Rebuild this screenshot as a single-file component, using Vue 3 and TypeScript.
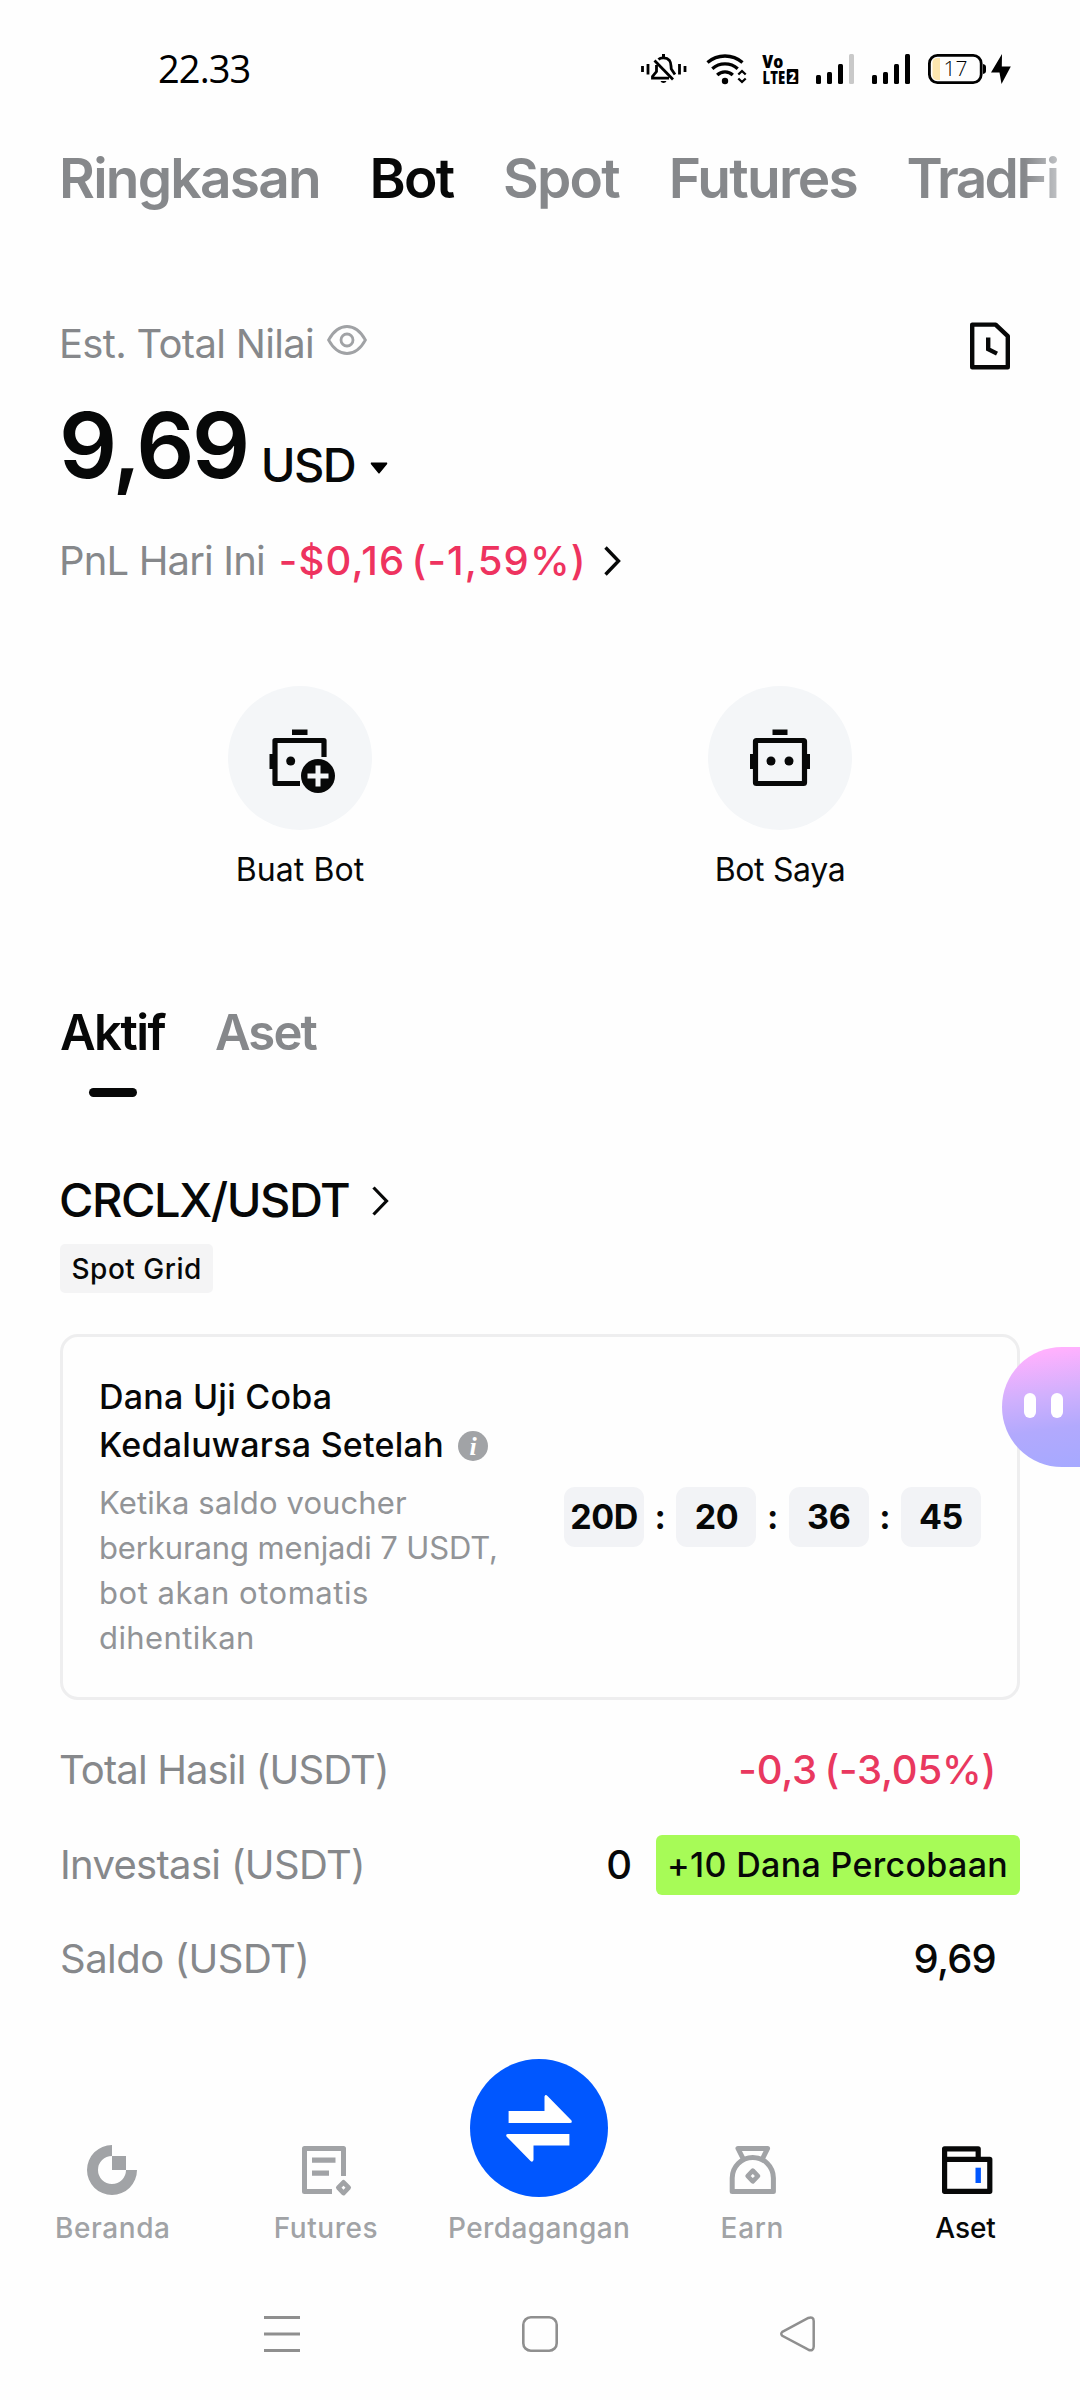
<script setup lang="ts">
interface Line {
  text: string
  spacing: number
}

const tabs = ['Ringkasan', 'Bot', 'Spot', 'Futures', 'TradFi']

const description: Line[] = [
  { text: 'Ketika saldo voucher', spacing: 0.11 },
  { text: 'berkurang menjadi 7 USDT,', spacing: -0.12 },
  { text: 'bot akan otomatis', spacing: 0.53 },
  { text: 'dihentikan', spacing: 0.41 },
]

const countdown = ['20D', '20', '36', '45']
</script>

<template>
  <div class="screen">
    <header class="status">
      <span class="clock">22.33</span>
      <svg class="status-icons" viewBox="636 50 380 40" width="380" height="40">
        <!-- muted bell -->
        <g fill="none" stroke="#000" stroke-width="2.8">
          <path d="M642.5 66v6M648 64v10.5M679.5 64v10.5M685 66v6" />
          <path d="M656.5 65v6.5L652.5 76.5V78.2H669" />
          <path d="M658.5 59.5C660.5 57.4 666.5 57 669.5 60.5C671.5 63 670.8 66.5 671.3 69L675 74.5" />
          <path d="M654.5 60.5L673 79.5" />
        </g>
        <path d="M662 54h3v3h-3zM660.5 81h6a3.2 3 0 0 1-6 0z" />
        <!-- wifi -->
        <g fill="none" stroke="#000" stroke-width="3.3">
          <path d="M707.5 62.5C717.5 53.8 732.5 53.8 742.5 62.5" />
          <path d="M712.3 68.8C719.5 62.3 730.5 62.3 737.7 68.8" />
          <path d="M717.2 75C721.5 70.9 728.5 70.9 732.8 75" />
          <path stroke-width="2.3" d="M738.3 74.5L742 71L745.7 74.5M738.3 78.5L742 82L745.7 78.5" />
        </g>
        <circle cx="725" cy="81" r="3.2" />
        <!-- VoLTE -->
        <rect x="786.8" y="69" width="11.5" height="15" rx="1" />
        <text class="volte">
          <tspan x="762.3" y="68.3" textLength="21" lengthAdjust="spacingAndGlyphs">Vo</tspan>
          <tspan x="762.6" y="83.5" textLength="22.5" lengthAdjust="spacingAndGlyphs">LTE</tspan>
          <tspan x="789" y="81.5" font-size="13.5" fill="#fff" textLength="7" lengthAdjust="spacingAndGlyphs">2</tspan>
        </text>
        <!-- signal bars -->
        <g>
          <rect x="816" y="75" width="5" height="9" rx="1.5" />
          <rect x="827" y="72" width="5" height="12" rx="1.5" />
          <rect x="838" y="64" width="5" height="20" rx="1.5" />
          <rect x="849" y="54" width="5" height="30" rx="1.5" fill="#c9c9c9" />
          <rect x="872" y="75" width="5" height="9" rx="1.5" />
          <rect x="883" y="72" width="5" height="12" rx="1.5" />
          <rect x="894" y="64" width="5" height="20" rx="1.5" />
          <rect x="905" y="54" width="5" height="30" rx="1.5" />
        </g>
        <!-- battery -->
        <path d="M940 58v22h-3a4.5 4.5 0 0 1-4.5-4.5V62.5a4.5 4.5 0 0 1 4.5-4.5z" fill="#fde6ae" />
        <rect x="929.4" y="55.4" width="51.8" height="27.2" rx="8" fill="none" stroke="#000" stroke-width="2.8" />
        <path d="M983 64q3 .6 3 3v4q0 2.4-3 3z" />
        <text class="charge" x="943.5" y="76">17</text>
        <path d="M1002 54L991 72.5H999.5L1001.5 84L1010.8 66.5H1001.8Z" />
      </svg>
    </header>

    <nav class="tabs">
      <span v-for="tab in tabs" :key="tab" class="tab" :class="{ on: tab === 'Bot', last: tab === 'TradFi' }">{{ tab }}</span>
    </nav>

    <section class="overview">
      <div class="est">
        <span class="est-label">Est. Total Nilai</span>
        <svg class="eye" viewBox="0 0 40 30" width="40" height="30" fill="none" stroke="#a0a2a5" stroke-width="2.8">
          <path d="M1.6 15C6 7 12.5 1.5 20 1.5S34 7 38.4 15C34 23 27.5 28.5 20 28.5S6 23 1.6 15Z" />
          <circle cx="20" cy="15" r="6" />
        </svg>
        <svg class="history" viewBox="0 0 40 48" width="40" height="48" fill="none" stroke="#070808" stroke-width="4.4">
          <path d="M2.2 2.6H25.6L37.8 14.2V45.2H2.2Z" stroke-linejoin="round" />
          <path d="M18.2 15.4V27.2L27 31.6" />
        </svg>
      </div>
      <div class="amount">
        <span class="number">9,69</span>
        <span class="currency">USD</span>
        <svg class="caret" viewBox="0 0 18 12" width="18" height="12"><path d="M1 .5H17Q17.6 1.5 17 2.2L9.8 11Q9 12 8.2 11L1 2.2Q.4 1.5 1 .5Z" /></svg>
      </div>
      <div class="pnl">
        <span class="pnl-label">PnL Hari Ini</span>
        <span class="pnl-value">-$0,16 (-1,59%)</span>
        <svg viewBox="0 0 17 30" width="17" height="30" fill="none" stroke="#070808" stroke-width="3.4"><path d="M1.5 1.5L14.5 15L1.5 28.5" /></svg>
      </div>
    </section>

    <section class="actions">
      <div class="action">
        <svg class="disc" viewBox="0 0 144 144" width="144" height="144">
          <path d="M96 71V54.5H47V97.5H72" fill="none" stroke="#070808" stroke-width="5.2" stroke-linejoin="round" />
          <path d="M64 43.5h15.5v5.5H64zM41.5 68h4v15h-4z" fill="#070808" />
          <circle cx="62.7" cy="75" r="4.5" fill="#070808" />
          <circle cx="90" cy="90" r="17" fill="#070808" />
          <path d="M90 79.5v21M79.5 90h21" stroke="#f4f6f8" stroke-width="5" />
        </svg>
        <span class="l1">Buat Bot</span>
      </div>
      <div class="action">
        <svg class="disc" viewBox="0 0 144 144" width="144" height="144">
          <rect x="47.5" y="54.5" width="49" height="43" rx="1" fill="none" stroke="#070808" stroke-width="5.2" />
          <path d="M64.5 43.5h15v5.5h-15zM42 68h4v15h-4zM98 68h4v15h-4z" fill="#070808" />
          <circle cx="63" cy="75" r="4.5" fill="#070808" />
          <circle cx="81" cy="75" r="4.5" fill="#070808" />
        </svg>
        <span class="l2">Bot Saya</span>
      </div>
    </section>

    <nav class="subtabs">
      <span class="subtab on">Aktif</span>
      <span class="subtab off">Aset</span>
    </nav>
    <div class="indicator"></div>

    <section class="bot">
      <div class="pair">
        <span>CRCLX/USDT</span>
        <svg viewBox="0 0 17 30" width="17" height="30" fill="none" stroke="#070808" stroke-width="3.2"><path d="M1.5 1.5L14.5 15L1.5 28.5" /></svg>
      </div>
      <span class="tag">Spot Grid</span>

      <div class="card">
        <div class="card-text">
          <div class="title">Dana Uji Coba</div>
          <div class="title">
            <span>Kedaluwarsa Setelah</span>
            <svg class="info" viewBox="0 0 30 30" width="30" height="30"><circle cx="15" cy="15" r="15" fill="#a1a3a6" /><text x="15" y="23.5" text-anchor="middle">i</text></svg>
          </div>
          <div class="desc">
            <div v-for="line in description" :key="line.text" :style="{ letterSpacing: line.spacing + 'px' }">{{ line.text }}</div>
          </div>
        </div>
        <div class="timer">
          <template v-for="(unit, i) in countdown" :key="i">
            <span v-if="i > 0" class="colon">:</span>
            <span class="unit">{{ unit }}</span>
          </template>
        </div>
      </div>

      <div class="row">
        <span class="key k1">Total Hasil (USDT)</span>
        <span class="value loss">-0,3 (-3,05%)</span>
      </div>
      <div class="row">
        <span class="key k2">Investasi (USDT)</span>
        <span class="value zero">0</span>
        <span class="badge">+10 Dana Percobaan</span>
      </div>
      <div class="row">
        <span class="key k3">Saldo (USDT)</span>
        <span class="value balance">9,69</span>
      </div>
    </section>

    <div class="assistant"><i></i><i></i></div>

    <nav class="bottom">
      <div class="item">
        <svg viewBox="0 0 60 52" width="60" height="52" fill="#a1a3a6"><path d="M29 0A25 25 0 1 0 54 25H43A14 14 0 1 1 29 11ZM29 11h14v14h-14z" /></svg>
        <span class="n1">Beranda</span>
      </div>
      <div class="item">
        <svg viewBox="0 0 60 52" width="60" height="52" fill="none" stroke="#a1a3a6" stroke-width="5">
          <path d="M47.5 31V3.5H8.5V46.5H36" stroke-linejoin="round" />
          <path d="M16 15.2H39.5M16 28.2H33" stroke-width="5.3" />
          <path d="M47.5 37.3L52.7 42.7L47.5 48.1L42.3 42.7Z" stroke-width="4.6" stroke-linejoin="round" />
        </svg>
        <span class="n2">Futures</span>
      </div>
      <div class="item">
        <svg class="trade" viewBox="0 0 138 138" width="138" height="138">
          <circle cx="69" cy="69" r="69" fill="#0057ff" />
          <path d="M38.6 52H74.5V37.5Q75.5 35 77.5 37L101.5 61.5Q102.5 64 100 64H38.6Z" fill="#fff" />
          <path d="M99.4 75V86.5H63.5V101Q62.5 104 60.5 102L36.5 77.5Q35.5 75 38 75Z" fill="#fff" />
        </svg>
        <span class="n3">Perdagangan</span>
      </div>
      <div class="item">
        <svg viewBox="0 0 60 52" width="60" height="52" fill="none" stroke="#a1a3a6" stroke-width="5" stroke-linejoin="round">
          <path d="M10.2 46.5V33A20.6 20.6 0 0 1 51.4 33V46.5Z" />
          <path d="M21.5 14.5L16 3.5H45.6L40.1 14.5" />
          <path d="M30.8 25.6L36 31L30.8 36.4L25.6 31Z" stroke-width="4.6" />
        </svg>
        <span class="n4">Earn</span>
      </div>
      <div class="item active">
        <svg viewBox="0 0 60 52" width="60" height="52" fill="none" stroke="#070808" stroke-width="5.2" stroke-linejoin="round">
          <path d="M8.6 14.3V3.8H42.2V14.3" />
          <path d="M8.6 14.3H53.8V46.3H8.6Z" />
          <path d="M42.2 22.7V38" stroke="#0057ff" stroke-width="5.4" />
        </svg>
        <span class="n5">Aset</span>
      </div>
    </nav>

    <footer class="system">
      <svg viewBox="0 0 36 36" width="36" height="36" stroke="#8f8f8f" stroke-width="2.9"><path d="M0 1.5H36M0 18H36M0 34.5H36" /></svg>
      <svg viewBox="0 0 36 36" width="36" height="36" fill="none" stroke="#8f8f8f" stroke-width="2.6"><rect x="1.3" y="1.3" width="33.4" height="33.4" rx="7.5" /></svg>
      <svg viewBox="0 0 36 36" width="36" height="36" fill="none" stroke="#8f8f8f" stroke-width="2.5"><path d="M2.3 15.8L28.3 2Q33.6 .2 33.7 5V30.5Q33.6 35.5 28.3 33.7L2.3 19.8Q.2 17.8 2.3 15.8Z" /></svg>
    </footer>
  </div>
</template>

<style>
body {
  background: #fefefe;
}
</style>

<style scoped>
.screen {
  position: relative;
  box-sizing: border-box;
  width: 1080px;
  height: 2400px;
  overflow: hidden;
  background: #fefefe;
  color: #070808;
  font-family: Inter, 'Liberation Sans', sans-serif;
  white-space: nowrap;
}
svg {
  display: block;
  flex: none;
}
.status {
  display: flex;
  align-items: center;
  justify-content: space-between;
  height: 137px;
  padding: 0 64px 0 158px;
}
.clock {
  margin-top: -2px;
  font-family: 'Open Sans', sans-serif;
  font-size: 38px;
  line-height: 50px;
  letter-spacing: -0.9px;
  color: #000;
}
.status-icons {
  margin-top: 3px;
}
.volte {
  font-family: 'Open Sans', sans-serif;
  font-size: 17.5px;
  font-weight: 800;
}
.charge {
  font-family: 'Open Sans', sans-serif;
  font-size: 21px;
  font-weight: 300;
}
.tabs {
  display: flex;
  gap: 49.6px;
  height: 82px;
  width: 1021px;
  padding-left: 59px;
  font-size: 55px;
  line-height: 82px;
  font-weight: 600;
  letter-spacing: -1.75px;
  color: #86888b;
}
.tab.on {
  color: #070808;
}
.tab.last {
  letter-spacing: -2.7px;
  color: transparent;
  background: linear-gradient(90deg, #86888b 78%, #bfc1c4 100%);
  background-clip: text;
  -webkit-background-clip: text;
}
.overview {
  margin-top: 99px;
  padding: 0 70px 0 59px;
}
.est {
  display: flex;
  align-items: center;
  height: 51px;
}
.est-label,
.pnl-label {
  font-size: 40px;
  line-height: 51px;
  color: #86888b;
}
.est-label {
  letter-spacing: -0.69px;
}
.eye {
  margin: -7px 0 0 13px;
}
.history {
  margin: 4px 0 0 auto;
}
.amount {
  display: flex;
  align-items: flex-end;
  height: 92px;
  margin-top: 30px;
}
.number {
  font-size: 91px;
  line-height: 92px;
  font-weight: 600;
  letter-spacing: -2.46px;
}
.currency {
  margin-left: 13px;
  font-size: 47px;
  line-height: 52px;
  font-weight: 500;
  letter-spacing: -1.58px;
}
.caret {
  margin: 0 0 17px 15px;
}
.pnl {
  display: flex;
  align-items: center;
  height: 51px;
  margin-top: 44px;
}
.pnl-label {
  letter-spacing: -0.84px;
}
.pnl-value {
  margin: 0 17px 0 14px;
  font-size: 40px;
  line-height: 51px;
  font-weight: 500;
  letter-spacing: 1.15px;
  word-spacing: -5.5px;
  color: #ee335f;
}
.actions {
  display: grid;
  grid-template-columns: 480px 480px;
  margin-top: 100px;
  padding-left: 60px;
}
.action {
  display: flex;
  flex-direction: column;
  align-items: center;
  gap: 20px;
  font-size: 32px;
  line-height: 40px;
}
.disc {
  border-radius: 50%;
  background: #f4f6f8;
}
.l1 {
  letter-spacing: 0.08px;
}
.l2 {
  letter-spacing: -0.35px;
}
.subtabs {
  display: flex;
  gap: 50px;
  margin-top: 113px;
  padding-left: 60px;
  font-size: 49px;
  line-height: 60px;
  font-weight: 600;
}
.subtab.on {
  letter-spacing: -1.55px;
}
.subtab.off {
  letter-spacing: -1.9px;
  color: #86888b;
}
.indicator {
  width: 48px;
  height: 9px;
  margin: 25px 0 0 89px;
  border-radius: 5px;
  background: #070808;
}
.bot {
  margin-top: 73px;
  padding: 0 60px;
}
.pair {
  display: flex;
  align-items: center;
  gap: 23px;
  height: 60px;
  margin-left: -1px;
  font-size: 47px;
  line-height: 60px;
  font-weight: 500;
  letter-spacing: -1.44px;
}
.pair svg {
  margin-top: 2px;
}
.tag {
  display: block;
  box-sizing: border-box;
  width: 153px;
  height: 49px;
  margin-top: 14px;
  padding-left: 11.5px;
  border-radius: 5px;
  background: #f4f4f5;
  font-size: 28px;
  line-height: 50px;
  font-weight: 500;
  letter-spacing: 0.5px;
}
.card {
  box-sizing: border-box;
  display: flex;
  justify-content: space-between;
  height: 366px;
  margin-top: 41px;
  padding: 0 36px;
  border: 3px solid #eeeeef;
  border-radius: 18px;
}
.card-text {
  padding-top: 36px;
}
.title {
  display: flex;
  align-items: center;
  height: 48px;
  font-size: 34px;
  line-height: 48px;
  font-weight: 500;
  letter-spacing: 0.25px;
}
.info {
  margin: 2px 0 0 14px;
}
.info text {
  font-family: 'Liberation Serif', serif;
  font-size: 26px;
  font-style: italic;
  font-weight: 700;
  letter-spacing: 0;
  fill: #fff;
}
.desc {
  margin-top: 11px;
  font-size: 31px;
  line-height: 45px;
  color: #929497;
}
.timer {
  display: flex;
  align-self: center;
  font-size: 34px;
  line-height: 60px;
  font-weight: 700;
  text-align: center;
}
.unit {
  width: 80px;
  border-radius: 11px;
  background: #f2f3f6;
  letter-spacing: -0.4px;
}
.colon {
  width: 32.3px;
}
.row {
  display: flex;
  align-items: center;
  height: 94.6px;
  font-size: 40px;
  line-height: 50px;
}
.card + .row {
  margin-top: 23px;
}
.key {
  margin-right: auto;
  color: #86888b;
}
.k1 {
  margin-left: -1px;
  letter-spacing: -0.87px;
}
.k2 {
  letter-spacing: -0.68px;
}
.k3 {
  letter-spacing: -0.52px;
}
.value {
  font-weight: 500;
}
.loss {
  margin-right: 24px;
  letter-spacing: -0.2px;
  word-spacing: -3px;
  color: #e9385f;
}
.zero {
  margin-right: 24px;
}
.balance {
  margin-right: 24px;
  letter-spacing: -0.79px;
}
.badge {
  box-sizing: border-box;
  width: 364px;
  padding-left: 11px;
  border-radius: 6px;
  background: #a7fb57;
  font-size: 34px;
  line-height: 60px;
  font-weight: 500;
  letter-spacing: 0.33px;
}
.assistant {
  position: absolute;
  top: 1347px;
  right: 0;
  box-sizing: border-box;
  display: flex;
  gap: 15px;
  width: 78px;
  height: 120px;
  padding: 46px 0 0 22px;
  border-radius: 60px 0 0 60px;
  background: linear-gradient(172deg, #ffb1fe 8%, #d0b0fd 42%, #b2a9fd 68%, #a6a9ff 100%);
}
.assistant i {
  width: 12px;
  height: 25px;
  border-radius: 6px;
  background: #fff;
}
.bottom {
  display: grid;
  grid-template-columns: repeat(5, 213.2px);
  height: 187px;
  margin-top: 52px;
  padding-left: 6.2px;
}
.item {
  display: flex;
  flex-direction: column;
  align-items: center;
  justify-content: flex-end;
  gap: 13px;
  font-size: 28px;
  line-height: 36px;
  font-weight: 500;
  color: #a1a3a6;
}
.item.active {
  color: #070808;
}
.n1 {
  letter-spacing: 0.6px;
}
.n2 {
  letter-spacing: 0.58px;
}
.n3 {
  letter-spacing: 0.4px;
}
.n4 {
  letter-spacing: 0.68px;
}
.n5 {
  letter-spacing: -0.09px;
}
.system {
  display: flex;
  gap: 222px;
  margin-top: 70px;
  padding-left: 264px;
}
</style>
